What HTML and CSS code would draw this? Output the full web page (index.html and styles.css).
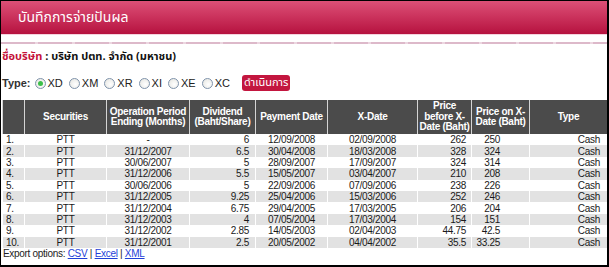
FILE: index.html
```html
<!DOCTYPE html>
<html>
<head>
<meta charset="utf-8">
<link rel="stylesheet" href="styles.css">
</head>
<body>
<div class="frame">
  <div class="banner"><h1 class="title">บันทึกการจ่ายปันผล</h1></div>
  <div class="rule"></div>
  <div class="company"><span class="company-label">ชื่อบริษัท</span> : บริษัท ปตท. จำกัด (มหาชน)</div>
  <div class="typebar">
    <span class="type-label">Type:</span>
    <label class="opt"><span class="radio checked"></span>XD</label>
    <label class="opt"><span class="radio"></span>XM</label>
    <label class="opt"><span class="radio"></span>XR</label>
    <label class="opt"><span class="radio"></span>XI</label>
    <label class="opt"><span class="radio"></span>XE</label>
    <label class="opt"><span class="radio"></span>XC</label>
    <button class="go">ดำเนินการ</button>
  </div>
  <table class="grid">
    <colgroup>
      <col class="c-no"><col class="c-sec"><col class="c-op"><col class="c-div"><col class="c-pay"><col class="c-xd"><col class="c-pb"><col class="c-po"><col class="c-type">
    </colgroup>
    <thead>
      <tr>
        <th></th>
        <th>Securities</th>
        <th>Operation Period<br>Ending (Months)</th>
        <th>Dividend<br>(Baht/Share)</th>
        <th>Payment Date</th>
        <th>X-Date</th>
        <th>Price<br>before X-<br>Date (Baht)</th>
        <th>Price on X-<br>Date (Baht)</th>
        <th>Type</th>
      </tr>
    </thead>
    <tbody>
      <tr><td class="no">1.</td><td class="ctr">PTT</td><td class="ctr">-</td><td class="num div">6</td><td class="ctr">12/09/2008</td><td class="ctr">02/09/2008</td><td class="num pb">262</td><td class="num po">250</td><td class="num ty">Cash</td></tr>
      <tr><td class="no">2.</td><td class="ctr">PTT</td><td class="ctr">31/12/2007</td><td class="num div">6.5</td><td class="ctr">30/04/2008</td><td class="ctr">18/03/2008</td><td class="num pb">328</td><td class="num po">324</td><td class="num ty">Cash</td></tr>
      <tr><td class="no">3.</td><td class="ctr">PTT</td><td class="ctr">30/06/2007</td><td class="num div">5</td><td class="ctr">28/09/2007</td><td class="ctr">17/09/2007</td><td class="num pb">324</td><td class="num po">314</td><td class="num ty">Cash</td></tr>
      <tr><td class="no">4.</td><td class="ctr">PTT</td><td class="ctr">31/12/2006</td><td class="num div">5.5</td><td class="ctr">15/05/2007</td><td class="ctr">03/04/2007</td><td class="num pb">210</td><td class="num po">208</td><td class="num ty">Cash</td></tr>
      <tr><td class="no">5.</td><td class="ctr">PTT</td><td class="ctr">30/06/2006</td><td class="num div">5</td><td class="ctr">22/09/2006</td><td class="ctr">07/09/2006</td><td class="num pb">238</td><td class="num po">226</td><td class="num ty">Cash</td></tr>
      <tr><td class="no">6.</td><td class="ctr">PTT</td><td class="ctr">31/12/2005</td><td class="num div">9.25</td><td class="ctr">25/04/2006</td><td class="ctr">15/03/2006</td><td class="num pb">252</td><td class="num po">246</td><td class="num ty">Cash</td></tr>
      <tr><td class="no">7.</td><td class="ctr">PTT</td><td class="ctr">31/12/2004</td><td class="num div">6.75</td><td class="ctr">29/04/2005</td><td class="ctr">17/03/2005</td><td class="num pb">206</td><td class="num po">204</td><td class="num ty">Cash</td></tr>
      <tr><td class="no">8.</td><td class="ctr">PTT</td><td class="ctr">31/12/2003</td><td class="num div">4</td><td class="ctr">07/05/2004</td><td class="ctr">17/03/2004</td><td class="num pb">154</td><td class="num po">151</td><td class="num ty">Cash</td></tr>
      <tr><td class="no">9.</td><td class="ctr">PTT</td><td class="ctr">31/12/2002</td><td class="num div">2.85</td><td class="ctr">14/05/2003</td><td class="ctr">02/04/2003</td><td class="num pb">44.75</td><td class="num po">42.5</td><td class="num ty">Cash</td></tr>
      <tr><td class="no">10.</td><td class="ctr">PTT</td><td class="ctr">31/12/2001</td><td class="num div">2.5</td><td class="ctr">20/05/2002</td><td class="ctr">04/04/2002</td><td class="num pb">35.5</td><td class="num po">33.25</td><td class="num ty">Cash</td></tr>
    </tbody>
  </table>
  <div class="export">Export options: <a href="#" class="lnk">CSV</a> | <a href="#" class="lnk">Excel</a> | <a href="#" class="lnk">XML</a></div>
</div>
</body>
</html>
```
FILE: styles.css
```css
html, body {
  margin: 0;
  padding: 0;
  background: #fff;
}

.frame {
  width: 609px;
  height: 267px;
  box-sizing: border-box;
  border-style: solid;
  border-color: #000;
  border-width: 1px 2px 2px 1px;
  overflow: hidden;
  background: #fff;
  font-family: "Liberation Sans", "DejaVu Sans", sans-serif;
  color: #222;
}

.banner {
  height: 33px;
  background: linear-gradient(#dc5077, #cc345e 45%, #b6123f);
  border-bottom: 1px solid #f5d3dd;
  display: flex;
  align-items: center;
  padding-left: 17px;
}

.title {
  margin: 0;
  font-family: "Tahoma", "Noto Sans Thai", "Loma", "Garuda", "Noto Sans", sans-serif;
  font-size: 14px;
  font-weight: normal;
  color: #fff;
  line-height: 18px;
}

.rule {
  margin-top: 7px;
  height: 2px;
  background: repeating-linear-gradient(90deg, #ddb9ca 0 34px, #ecd6e0 34px 37px);
}

.company {
  margin-top: 6px;
  height: 14px;
  line-height: 14px;
  padding-left: 1px;
  font-family: "Tahoma", "Noto Sans Thai", "Loma", "Garuda", "Liberation Sans", sans-serif;
  font-size: 11px;
  font-weight: bold;
  color: #111;
}

.company-label {
  color: #c4123a;
}

.typebar {
  margin-top: 10px;
  height: 18px;
  display: flex;
  align-items: center;
  padding-left: 1px;
  font-family: "Liberation Sans", sans-serif;
  font-size: 11px;
}

.type-label {
  font-weight: bold;
  color: #333;
  margin-right: 4px;
}

.opt {
  display: inline-flex;
  align-items: center;
  color: #222;
  margin-right: 6px;
}

.radio {
  width: 9px;
  height: 9px;
  border: 1px solid #7f93ab;
  border-radius: 50%;
  background: radial-gradient(circle at 60% 60%, #fff, #e3e3de);
  margin-right: 2px;
  position: relative;
  box-sizing: content-box;
}

.radio.checked::after {
  content: "";
  position: absolute;
  left: 2px;
  top: 2px;
  width: 5px;
  height: 5px;
  border-radius: 50%;
  background: #3cbf4a;
}

.go {
  margin-left: 6px;
  height: 16px;
  padding: 0 2px;
  border: 0;
  border-radius: 3px;
  background: #c3163f;
  color: #fff;
  font-family: "Tahoma", "Noto Sans Thai", "Loma", "Garuda", "Liberation Sans", sans-serif;
  font-size: 11px;
  line-height: 16px;
}

.grid {
  margin-top: 8px;
  margin-left: 1px;
  width: 605px;
  table-layout: fixed;
  border-collapse: collapse;
  font-size: 10px;
  letter-spacing: -0.3px;
}

.c-no { width: 22px; }
.c-sec { width: 82px; }
.c-op { width: 83px; }
.c-div { width: 66px; }
.c-pay { width: 72px; }
.c-xd { width: 90px; }
.c-pb { width: 54px; }
.c-po { width: 58px; }
.c-type { width: 78px; }

.grid th {
  height: 34px;
  box-sizing: border-box;
  padding: 0;
  background: #4b4b4b;
  color: #fff;
  font-weight: bold;
  font-size: 10px;
  letter-spacing: -0.3px;
  line-height: 10.5px;
  white-space: nowrap;
  overflow: hidden;
  border: 1px solid #d4d4d4;
  border-top: 0;
  border-bottom: 0;
  vertical-align: middle;
}

.grid td {
  height: 11.4px;
  padding: 0;
  line-height: 11px;
  color: #1a1a1a;
  border-left: 1px solid #fff;
  border-right: 1px solid #fff;
  white-space: nowrap;
  overflow: hidden;
}

.grid tbody tr:nth-child(even) td {
  background: #e2e2e2;
}

.grid td.no { padding-left: 3px; text-align: left; }
.grid td.ctr { text-align: center; }
.grid td.num { text-align: right; }
.grid td.div { padding-right: 6px; }
.grid td.pb { padding-right: 5px; }
.grid td.po { padding-right: 29px; }
.grid td.ty { padding-right: 7px; }

.export {
  padding-left: 2px;
  font-size: 10px;
  letter-spacing: -0.3px;
  line-height: 11px;
  color: #222;
}

.lnk {
  color: #1f3fd8;
  text-decoration: underline;
}
```
